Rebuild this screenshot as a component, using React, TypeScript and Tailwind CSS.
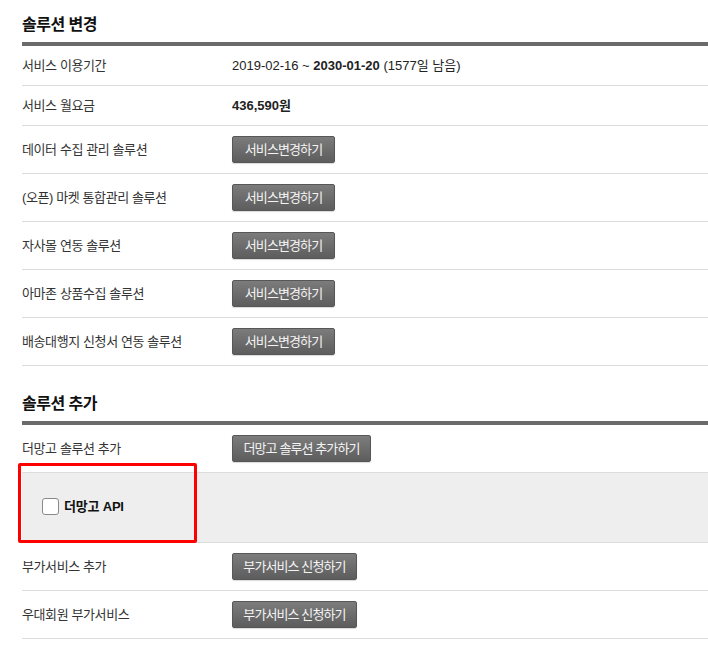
import React from "react";

const FONT = { fontFamily: '"Liberation Sans", "Noto Sans CJK KR", sans-serif' };

function Btn({ children, w }: { children: React.ReactNode; w: string }) {
  return (
    <button
      className={`${w} h-[27px] flex items-center justify-center rounded-[2px] border border-[#575757] bg-gradient-to-b from-[#7c7c7c] to-[#5d5d5d] text-[#f4f4f4] text-[13px] tracking-[-0.9px] leading-none shadow-[0_1px_1px_rgba(0,0,0,0.15)]`}
    >
      {children}
    </button>
  );
}

function Heading({ children }: { children: React.ReactNode }) {
  return (
    <>
      <div className="h-[42px] pt-[15px] leading-[20px] text-[16px] font-bold text-[#111] tracking-[-0.5px]">
        {children}
      </div>
      <div className="h-[4px] bg-[#6b6b6b]" />
    </>
  );
}

function Row({
  label,
  children,
  h,
}: {
  label: string;
  children?: React.ReactNode;
  h: string;
}) {
  return (
    <div className={`${h} flex items-center border-b border-[#dddddd]`}>
      <div className="w-[210px] text-[13px] text-[#333] tracking-[-0.4px] leading-none">{label}</div>
      <div className="flex items-center text-[13px] text-[#222] leading-none">{children}</div>
    </div>
  );
}

export default function App() {
  return (
    <div className="w-[708px] min-h-[659px] bg-white overflow-hidden" style={FONT}>
      <div className="pl-[22px]">
        <section>
          <Heading>솔루션 변경</Heading>
          <Row label="서비스 이용기간" h="h-[40px]">
            <span>
              2019-02-16 ~ <b>2030-01-20</b> (1577일 남음)
            </span>
          </Row>
          <Row label="서비스 월요금" h="h-[40px]">
            <b>436,590원</b>
          </Row>
          <Row label="데이터 수집 관리 솔루션" h="h-[48px]">
            <Btn w="w-[103px]">서비스변경하기</Btn>
          </Row>
          <Row label="(오픈) 마켓 통합관리 솔루션" h="h-[48px]">
            <Btn w="w-[103px]">서비스변경하기</Btn>
          </Row>
          <Row label="자사몰 연동 솔루션" h="h-[48px]">
            <Btn w="w-[103px]">서비스변경하기</Btn>
          </Row>
          <Row label="아마존 상품수집 솔루션" h="h-[48px]">
            <Btn w="w-[103px]">서비스변경하기</Btn>
          </Row>
          <Row label="배송대행지 신청서 연동 솔루션" h="h-[48px]">
            <Btn w="w-[103px]">서비스변경하기</Btn>
          </Row>
        </section>

        <section className="mt-[13px]">
          <Heading>솔루션 추가</Heading>
          <Row label="더망고 솔루션 추가" h="h-[48px]">
            <Btn w="w-[139px]">더망고 솔루션 추가하기</Btn>
          </Row>
          <div className="relative h-[70px] flex items-center pb-[2px] bg-[#eeeeee] border-b border-[#dddddd]">
            <label className="flex items-center ml-[20px]">
              <span className="w-[17px] h-[17px] rounded-[3px] border border-[#8a8a8a] bg-white" />
              <span className="ml-[5px] text-[13px] font-bold text-[#111] tracking-[-0.2px] leading-none">
                더망고 API
              </span>
            </label>
            <div className="absolute left-[-4px] top-[-10px] w-[179px] h-[80px] border-[3px] border-[#ff0000] rounded-[2px] pointer-events-none" />
          </div>
          <Row label="부가서비스 추가" h="h-[48px]">
            <Btn w="w-[125px]">부가서비스 신청하기</Btn>
          </Row>
          <Row label="우대회원 부가서비스" h="h-[48px]">
            <Btn w="w-[125px]">부가서비스 신청하기</Btn>
          </Row>
        </section>
      </div>
    </div>
  );
}
